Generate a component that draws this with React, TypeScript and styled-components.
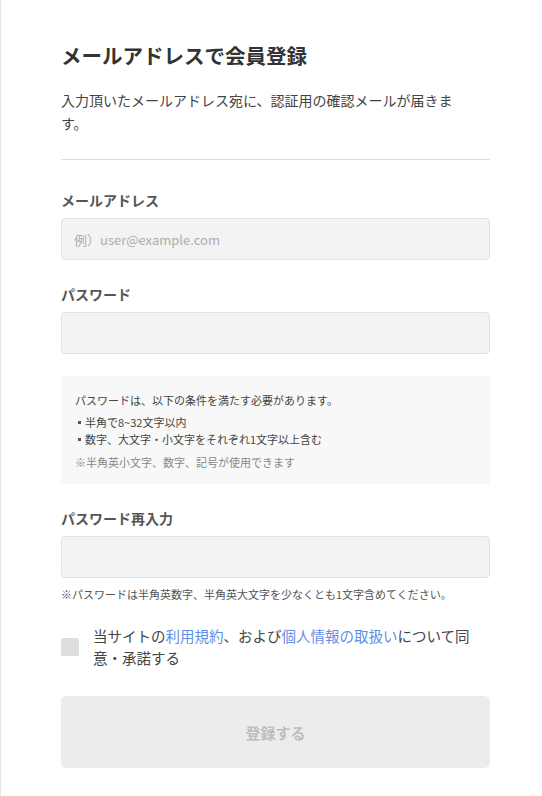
import React from 'react'
import styled, { createGlobalStyle } from 'styled-components'

const GlobalStyle = createGlobalStyle`
  html, body {
    margin: 0;
    padding: 0;
    background: #ffffff;
  }
  body {
    font-family: 'Noto Sans CJK JP', 'Noto Sans', sans-serif;
    color: #444444;
  }
  * {
    box-sizing: border-box;
  }
`

const Page = styled.div`
  min-height: 100vh;
  border-left: 1px solid #e6e6e6;
  padding: 40px 52px 30px 60px;
`

const Title = styled.h1`
  margin: 0;
  font-size: 20.5px;
  line-height: 30px;
  font-weight: 700;
  color: #333333;
`

const Lead = styled.p`
  margin: 19px 0 0;
  max-width: 405px;
  font-size: 14px;
  line-height: 23px;
  color: #444444;
`

const Divider = styled.hr`
  margin: 24px 0 0;
  border: none;
  border-top: 1px solid #dedede;
`

const Form = styled.form`
  display: flex;
  flex-direction: column;
  padding-top: 30px;
`

const Field = styled.div<{ $gap?: number }>`
  display: flex;
  flex-direction: column;
  gap: 8px;
  margin-top: ${(p) => p.$gap ?? 0}px;
`

const Label = styled.label`
  font-size: 14px;
  line-height: 20px;
  font-weight: 700;
  color: #555555;
`

const Input = styled.input`
  width: 100%;
  height: 42px;
  padding: 0 12px;
  border: 1px solid #e2e2e2;
  border-radius: 4px;
  background: #f3f3f3;
  font-family: inherit;
  font-size: 13px;
  color: #444444;
  outline: none;
  &::placeholder {
    color: #adadad;
  }
`

const Rules = styled.div`
  margin-top: 22px;
  padding: 16px 14px 13px;
  background: #f8f8f8;
  font-size: 11px;
  line-height: 17px;
  color: #444444;
`

const RuleList = styled.ul`
  list-style: none;
  margin: 5px 0 0;
  padding: 0;
`

const RuleItem = styled.li`
  position: relative;
  padding-left: 10px;
  &::before {
    content: '';
    position: absolute;
    left: 3px;
    top: 7px;
    width: 3px;
    height: 3px;
    background: #555555;
  }
`

const RuleNote = styled.p`
  margin: 6px 0 0;
  color: #888888;
`

const Hint = styled.p`
  margin: 8px 0 0;
  font-size: 11px;
  line-height: 16px;
  color: #555555;
`

const Agree = styled.label`
  display: flex;
  align-items: center;
  gap: 14px;
  margin-top: 23px;
  cursor: pointer;
`

const Check = styled.span`
  flex: none;
  width: 18px;
  height: 18px;
  border-radius: 2px;
  background: #dddddd;
`

const AgreeText = styled.span`
  max-width: 385px;
  font-size: 14.5px;
  line-height: 22px;
  color: #444444;
`

const Link = styled.a`
  color: #5f8ee6;
  text-decoration: none;
`

const Submit = styled.button`
  margin-top: 27px;
  height: 72px;
  width: 100%;
  border: none;
  border-radius: 6px;
  background: #ececec;
  font-family: inherit;
  font-size: 15px;
  font-weight: 700;
  color: #bdbdbd;
`

export default function App() {
  return (
    <>
      <GlobalStyle />
      <Page>
        <Title>メールアドレスで会員登録</Title>
        <Lead>入力頂いたメールアドレス宛に、認証用の確認メールが届きます。</Lead>
        <Divider />
        <Form onSubmit={(e) => e.preventDefault()}>
          <Field>
            <Label htmlFor='email'>メールアドレス</Label>
            <Input id='email' type='email' placeholder='例）user@example.com' />
          </Field>
          <Field $gap={24}>
            <Label htmlFor='password'>パスワード</Label>
            <Input id='password' type='password' />
          </Field>
          <Rules>
            パスワードは、以下の条件を満たす必要があります。
            <RuleList>
              <RuleItem>半角で8~32文字以内</RuleItem>
              <RuleItem>数字、大文字・小文字をそれぞれ1文字以上含む</RuleItem>
            </RuleList>
            <RuleNote>※半角英小文字、数字、記号が使用できます</RuleNote>
          </Rules>
          <Field $gap={24}>
            <Label htmlFor='password2'>パスワード再入力</Label>
            <Input id='password2' type='password' />
          </Field>
          <Hint>※パスワードは半角英数字、半角英大文字を少なくとも1文字含めてください。</Hint>
          <Agree>
            <Check />
            <AgreeText>
              当サイトの<Link href='#'>利用規約</Link>、および<Link href='#'>個人情報の取扱い</Link>について同意・承諾する
            </AgreeText>
          </Agree>
          <Submit type='submit' disabled>
            登録する
          </Submit>
        </Form>
      </Page>
    </>
  )
}
